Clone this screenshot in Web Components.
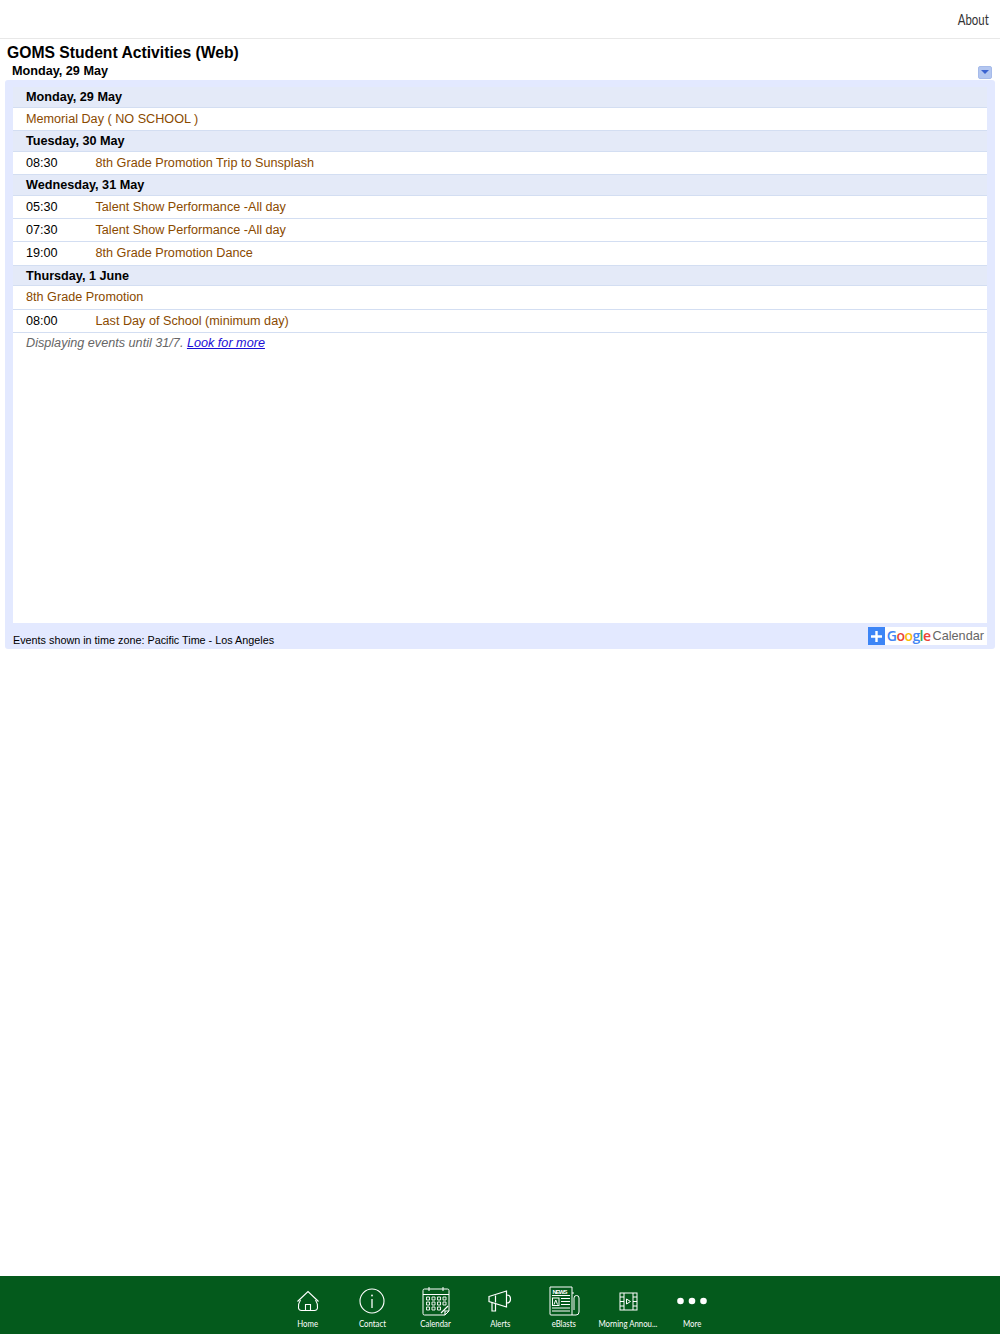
<!DOCTYPE html>
<html><head><meta charset="utf-8"><title>GOMS Student Activities</title>
<style>
html,body{margin:0;padding:0;height:100%;background:#fff}
body{font-family:"Liberation Sans",Arial,sans-serif}
</style></head><body>
<app-shell>
  <top-bar slot="top">About</top-bar>
  <cal-embed title-text="GOMS Student Activities (Web)" range="Monday, 29 May">
    <day-group label="Monday, 29 May">
      <event-row>Memorial Day ( NO SCHOOL )</event-row>
    </day-group>
    <day-group label="Tuesday, 30 May">
      <event-row time="08:30">8th Grade Promotion Trip to Sunsplash</event-row>
    </day-group>
    <day-group label="Wednesday, 31 May">
      <event-row time="05:30">Talent Show Performance -All day</event-row>
      <event-row time="07:30">Talent Show Performance -All day</event-row>
      <event-row time="19:00">8th Grade Promotion Dance</event-row>
    </day-group>
    <day-group label="Thursday, 1 June">
      <event-row>8th Grade Promotion</event-row>
      <event-row time="08:00">Last Day of School (minimum day)</event-row>
    </day-group>
  </cal-embed>
  <tab-bar slot="bottom">
    <tab-item label="Home"><svg viewBox="0 0 24 22" width="24" height="22" fill="none" stroke="#fff" stroke-width="1.1"><path d="M1.500 11.500 12 1.500l10.500 10"/><path d="M4.500 10c-2 3-2.500 5-2 8 .3 1.800 1.500 2.500 3 2.500h13c1.500 0 2.700-.7 3-2.500.5-3 0-5-2-8"/><path d="M9.500 20.500V14.500h5v6"/></svg></tab-item>
    <tab-item label="Contact"><svg viewBox="0 0 26 26" width="26" height="26" fill="none" stroke="#fff" stroke-width="1.100"><circle cx="13" cy="13" r="12"/><path d="M13 11v9" stroke-width="1.300"/><circle cx="13" cy="7.500" r=".9" fill="#fff" stroke="none"/></svg></tab-item>
    <tab-item label="Calendar"><svg viewBox="0 0 28 30" width="28" height="30" fill="none" stroke="#fff" stroke-width="1"><path d="M2.500 3H25.500Q27 3 27 4.500V25L23 29H2.500Q1 29 1 27.500V4.500Q1 3 2.500 3Z"/><path d="M1 8.500H27M7 1v4M21 1v4" /><path d="M23 29v-4h4M19 27l7-7" stroke-width="1.200"/><g stroke-width=".9"><path d="M4.500 11h3v3h-3zM10 11h3v3h-3zM15.500 11h3v3h-3zM21 11h3v3h-3zM4.500 16h3v3h-3zM10 16h3v3h-3zM15.500 16h3v3h-3zM21 16h3v3h-3zM4.500 21h3v3h-3zM10 21h3v3h-3zM15.500 21h3v3h-3z"/></g></svg></tab-item>
    <tab-item label="Alerts"><svg viewBox="0 0 24 22" width="24" height="22" fill="none" stroke="#fff" stroke-width="1.200"><path d="M1 6.500 18.500 1V17L1 11.500Z"/><path d="M18.500 5c3 0 4 1.500 4 4s-1 4-4 4"/><path d="M4 12.500v8.500h3.500v-7.500M7.500 5.500v7"/></svg></tab-item>
    <tab-item label="eBlasts"><svg viewBox="0 0 31 30" width="31" height="30" fill="none" stroke="#fff" stroke-width="1"><path d="M1 1H23V29H2Q1 29 1 28Z"/><path d="M23 7h2M23 29H27Q30 29 30 26V12Q30 9.500 27.500 9.500T25 12V24"/><text x="3.500" y="7.500" font-family="Liberation Sans" font-size="6" font-weight="bold" fill="#fff" stroke="none" textLength="15" lengthAdjust="spacing">NEWS</text><path d="M3 9.500H21M12 12.500H21M12 15.500H21M12 18.500H21M3 22H21M3 25H21" stroke-width="1"/><rect x="3.500" y="12" width="6.500" height="7.500"/><path d="M5 18.500l1.800-4.500L8.500 18.500"/></svg></tab-item>
    <tab-item label="Morning Annou..."><svg viewBox="0 0 19 19" width="19" height="19" fill="none" stroke="#fff" stroke-width="1"><rect x="1" y="1" width="17" height="17"/><path d="M5 1V18M14 1V18M1 5H5M1 9.500H5M1 14H5M14 5H18M14 9.500H18M14 14H18"/><path d="M7.500 7 11.500 9.500 7.500 12Z"/></svg></tab-item>
    <tab-item label="More"><svg viewBox="0 0 30 8" width="30" height="8" fill="#fff"><circle cx="3.500" cy="4" r="3.300"/><circle cx="15" cy="4" r="3.300"/><circle cx="26.500" cy="4" r="3.300"/></svg></tab-item>
  </tab-bar>
</app-shell>
<script>
function def(name,html,init){
  customElements.define(name,class extends HTMLElement{
    constructor(){super();this.attachShadow({mode:'open'}).innerHTML=html;}
    connectedCallback(){if(init)init(this,this.shadowRoot);}
  });
}
def('app-shell',`<style>
:host{display:flex;flex-direction:column;height:100vh;min-height:1334px}
main{flex:1;display:block;min-height:0}
</style><slot name="top"></slot><main><slot></slot></main><slot name="bottom"></slot>`);

def('top-bar',`<style>
:host{display:flex;justify-content:flex-end;align-items:center;height:38px;border-bottom:1px solid #e8e8e8;padding-right:11px;color:#333;font:400 15px/18px Lato,sans-serif}
span{display:inline-block;transform:scaleX(.76);transform-origin:right center}
</style><span><slot></slot></span>`);

def('cal-embed',`<style>
:host{display:block;color:#000;font-family:"Liberation Sans",Arial,sans-serif}
h1{margin:0;padding:5px 0 0 7px;font-size:15.700px;line-height:18px;font-weight:bold}
.range{display:flex;justify-content:space-between;align-items:center;height:18px;padding:0 8px 0 12px;font-size:12.650px;font-weight:bold}
.arrow{width:14px;height:13px;box-sizing:border-box;background:#b3c6f0;border:1px solid #a6bbea;border-radius:2px;display:flex;align-items:center;justify-content:center;margin-top:2px}
.arrow i{width:0;height:0;border:4px solid transparent;border-top:4px solid #3a62d0;border-bottom:0}
.panel{margin:0 5px;height:569px;box-sizing:border-box;background:#e3e9ff;border-radius:3px;padding:7px 8px 0;display:flex;flex-direction:column}
.body{flex:1;background:#fff;min-height:0}
.more{padding:1.800px 0 0 13px;font-size:12.650px;line-height:16px;font-style:italic;color:#666}
.more a{color:#1a0dd6;text-decoration:underline}
.foot{height:26px;display:flex;justify-content:space-between;align-items:flex-start;font-size:10.800px}
.tz{margin-top:10px;line-height:15px}
.gcal{margin-top:4px;display:flex;align-items:center;height:18px;background:#fff;color:#666}
.plus{width:17px;height:18px;background:#3d85f6;display:flex;align-items:center;justify-content:center}
.gw{margin-left:2px;font-weight:600;font-family:"Open Sans","Liberation Sans",sans-serif;font-size:14px;letter-spacing:-.55px;line-height:16px}
.cal{margin:0 3px 0 2px;font-size:12.700px}
</style>
<h1></h1>
<div class="range"><span class="r"></span><div class="arrow"><i></i></div></div>
<div class="panel">
  <div class="body"><slot></slot><div class="more">Displaying events until 31/7. <a href="#">Look for more</a></div></div>
  <div class="foot"><div class="tz">Events shown in time zone: Pacific Time - Los Angeles</div>
    <div class="gcal"><div class="plus"><svg width="11" height="11" viewBox="0 0 11 11"><path d="M4.300 0h2.400v4.300H11v2.400H6.700V11H4.300V6.700H0V4.300h4.300z" fill="#fff"/></svg></div><span class="gw"><span style="color:#4285f4">G</span><span style="color:#ea4335">o</span><span style="color:#fbbc05">o</span><span style="color:#4285f4">g</span><span style="color:#34a853">l</span><span style="color:#ea4335">e</span></span><span class="cal">Calendar</span></div>
  </div>
</div>`,(el,s)=>{s.querySelector('h1').textContent=el.getAttribute('title-text');s.querySelector('.r').textContent=el.getAttribute('range');});

def('day-group',`<style>
:host{display:block}
.h{height:20.600px;box-sizing:border-box;background:#e4eaf8;border-bottom:1px solid #d3def2;padding-left:13px;font-size:12.650px;line-height:21px;font-weight:bold;color:#000}
</style><div class="h"></div><slot></slot>`,(el,s)=>{s.querySelector('.h').textContent=el.getAttribute('label');});

def('event-row',`<style>
:host{display:flex;height:23.400px;box-sizing:border-box;border-bottom:1px solid #d3def2;padding-left:13px;font-size:12.650px;line-height:22px;background:#fff}
.t{width:69.500px;color:#000;flex:none}
.t:empty{display:none}
.x{color:#8a4a00}
</style><span class="t"></span><span class="x"><slot></slot></span>`,(el,s)=>{s.querySelector('.t').textContent=el.getAttribute('time')||'';});

def('tab-bar',`<style>
:host{display:flex;justify-content:center;height:58px;background:#045a1c;flex:none}
</style><slot></slot>`);

def('tab-item',`<style>
:host{display:flex;flex-direction:column;align-items:center;width:64px;color:#fff}
.i{height:40px;display:flex;align-items:center;justify-content:center;margin-top:5px}
.l{font:400 9.500px/12px Lato,sans-serif;white-space:nowrap;transform:scaleX(.82);margin-top:-3px}
</style><div class="i"><slot></slot></div><div class="l"></div>`,(el,s)=>{s.querySelector('.l').textContent=el.getAttribute('label');});
</script>
</body></html>
